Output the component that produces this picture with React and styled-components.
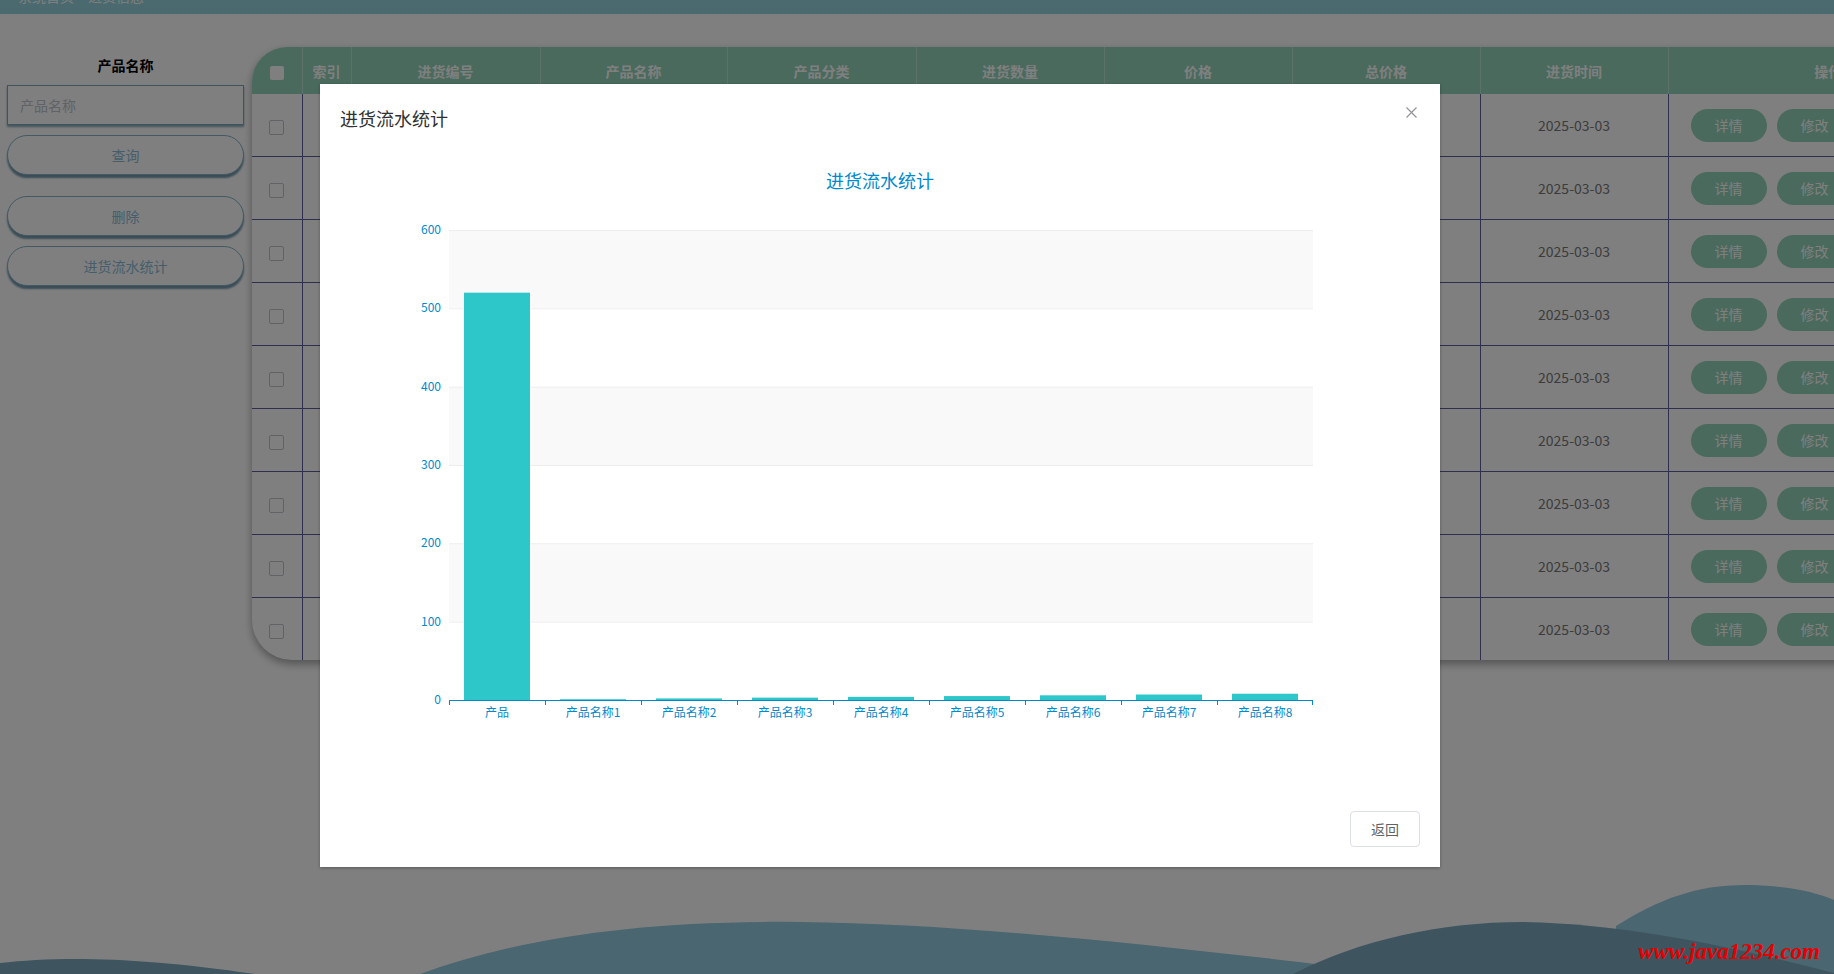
import React from "react";
import styled, { createGlobalStyle } from "styled-components";

const GlobalStyle = createGlobalStyle`
  html, body {
    margin: 0;
    padding: 0;
    height: 100%;
    overflow: hidden;
    background: #fff;
    font-family: "Noto Sans CJK SC", "Noto Sans", sans-serif;
  }
`;

const columns = [
  { key: "check", title: "", width: 50 },
  { key: "idx", title: "索引", width: 49 },
  { key: "code", title: "进货编号", width: 189 },
  { key: "name", title: "产品名称", width: 187 },
  { key: "cat", title: "产品分类", width: 189 },
  { key: "qty", title: "进货数量", width: 188 },
  { key: "price", title: "价格", width: 188 },
  { key: "total", title: "总价格", width: 188 },
  { key: "time", title: "进货时间", width: 188 },
  { key: "op", title: "操作", width: 320 },
];

const rows = Array.from({ length: 9 }, (_, i) => ({
  idx: i + 1,
  code: "JH2025030300" + (i + 1),
  name: i === 0 ? "产品" : "产品名称" + i,
  cat: "分类" + ((i % 3) + 1),
  qty: i === 0 ? 520 : i,
  price: "10.00",
  total: i === 0 ? "5200.00" : (i * 10).toFixed(2),
  time: "2025-03-03",
}));

const chartLabels = ["产品", "产品名称1", "产品名称2", "产品名称3", "产品名称4", "产品名称5", "产品名称6", "产品名称7", "产品名称8"];
const chartValues = [520, 1, 2, 3, 4, 5, 6, 7, 8];

function BarChart() {
  const left = 109;
  const right = 973;
  const top = 90;
  const bottom = 560;
  const max = 600;
  const band = (right - left) / chartValues.length;
  const barW = 66;
  const y = (v) => bottom - (v / max) * (bottom - top);
  const ticks = [0, 100, 200, 300, 400, 500, 600];

  return (
    <ChartSvg width="1080" height="661" viewBox="0 0 1080 661">
      <text x="540" y="48" textAnchor="middle" fontSize="18" fill="#008acd" fontFamily="Noto Sans CJK SC, sans-serif">
        进货流水统计
      </text>
      {ticks.slice(0, -1).map((t, i) => (
        <rect
          key={"area" + t}
          x={left}
          y={y(t + 100)}
          width={right - left}
          height={y(t) - y(t + 100)}
          fill={i % 2 === 1 ? "#f9f9f9" : "#ffffff"}
        />
      ))}
      {ticks.map((t) => (
        <g key={"tick" + t}>
          {t > 0 && <line x1={left} x2={right} y1={y(t) + 0.5} y2={y(t) + 0.5} stroke="#eeeeee" />}
          <text x={left - 8} y={y(t) + 4} textAnchor="end" fontSize="12" fill="#008acd" fontFamily="Noto Sans CJK SC, sans-serif">
            {t}
          </text>
        </g>
      ))}
      {chartValues.map((v, i) => (
        <rect key={"bar" + i} x={left + i * band + (band - barW) / 2} y={y(v)} width={barW} height={bottom - y(v)} fill="#2ec7c9" />
      ))}
      <line x1={left} x2={right} y1={bottom + 0.5} y2={bottom + 0.5} stroke="#008acd" />
      {chartLabels.map((_, i) => (
        <line key={"xt" + i} x1={left + i * band + 0.5} x2={left + i * band + 0.5} y1={bottom} y2={bottom + 5} stroke="#008acd" />
      ))}
      <line x1={right - 0.5} x2={right - 0.5} y1={bottom} y2={bottom + 5} stroke="#008acd" />
      {chartLabels.map((l, i) => (
        <text key={"xl" + i} x={left + i * band + band / 2} y={bottom + 17} textAnchor="middle" fontSize="12" fill="#008acd" fontFamily="Noto Sans CJK SC, sans-serif">
          {l}
        </text>
      ))}
    </ChartSvg>
  );
}

function Waves() {
  return (
    <WaveLayer width="1834" height="120" viewBox="0 0 1834 120" preserveAspectRatio="none">
      <path d="M1616 72 C1660 44, 1700 30, 1750 31 C1790 32, 1815 38, 1834 46 L1834 120 L1616 120 Z" fill="#94cce0" />
      <path d="M420 120 C520 84, 640 66, 800 68 C980 70, 1200 96, 1400 120 Z" fill="#94cce0" />
      <path d="M0 109 C60 102, 140 103, 255 120 L0 120 Z" fill="#7caac0" />
      <path d="M1293 120 C1360 86, 1440 68, 1523 68 C1640 70, 1760 100, 1834 119 L1834 120 Z" fill="#7caac0" />
    </WaveLayer>
  );
}

export default function App() {
  return (
    <Page>
      <GlobalStyle />
      <TopBar>
        <Crumb>系统首页 &gt; 进货信息</Crumb>
      </TopBar>
      <Content>
        <Sidebar>
          <FieldLabel>产品名称</FieldLabel>
          <SearchInput placeholder="产品名称" />
          <SideButton>查询</SideButton>
          <SideButton wide>删除</SideButton>
          <SideButton>进货流水统计</SideButton>
        </Sidebar>
        <TableCard>
          <Table>
            <colgroup>
              {columns.map((c) => (
                <col key={c.key} style={{ width: c.width }} />
              ))}
            </colgroup>
            <thead>
              <tr>
                {columns.map((c) => (
                  <Th key={c.key}>{c.key === "check" ? <HeadCheck /> : c.title}</Th>
                ))}
              </tr>
            </thead>
            <tbody>
              {rows.map((r) => (
                <Tr key={r.idx}>
                  <Td>
                    <RowCheck />
                  </Td>
                  <Td>{r.idx}</Td>
                  <Td>{r.code}</Td>
                  <Td>{r.name}</Td>
                  <Td>{r.cat}</Td>
                  <Td>{r.qty}</Td>
                  <Td>{r.price}</Td>
                  <Td>{r.total}</Td>
                  <Td>{r.time}</Td>
                  <OpCell>
                    <OpButton>详情</OpButton>
                    <OpButton>修改</OpButton>
                    <OpButton>删除</OpButton>
                  </OpCell>
                </Tr>
              ))}
            </tbody>
          </Table>
        </TableCard>
      </Content>
      <Waves />
      <Overlay />
      <Dialog>
        <DialogHeader>
          <DialogTitle>进货流水统计</DialogTitle>
          <CloseButton aria-label="close">
            <svg width="11" height="11" viewBox="0 0 11 11">
              <path d="M0.5 0.5 L10.5 10.5 M10.5 0.5 L0.5 10.5" stroke="#909399" strokeWidth="1.2" fill="none" />
            </svg>
          </CloseButton>
        </DialogHeader>
        <DialogBody>
          <BarChart />
        </DialogBody>
        <DialogFooter>
          <PlainButton>返回</PlainButton>
        </DialogFooter>
      </Dialog>
      <Watermark>www.java1234.com</Watermark>
    </Page>
  );
}

const Page = styled.div`
  position: relative;
  width: 100vw;
  height: 100vh;
  overflow: hidden;
  background: #fff;
`;

const TopBar = styled.div`
  height: 14px;
  background: #94d4de;
  overflow: hidden;
  padding-left: 18px;
`;

const Crumb = styled.div`
  margin-top: -14px;
  line-height: 20px;
  font-size: 14px;
  color: #fff;
`;

const Content = styled.div`
  display: flex;
  align-items: flex-start;
  padding: 33px 0 0 7px;
`;

const Sidebar = styled.div`
  flex: none;
  width: 237px;
  display: flex;
  flex-direction: column;
`;

const FieldLabel = styled.div`
  height: 38px;
  line-height: 36px;
  text-align: center;
  font-size: 14px;
  font-weight: bold;
  color: #000;
`;

const SearchInput = styled.input`
  box-sizing: border-box;
  height: 40px;
  width: 100%;
  padding: 0 12px;
  border: 1px solid #7caac0;
  box-shadow: 0 2px 2px rgba(60, 110, 140, 0.6);
  font-size: 14px;
  font-family: inherit;
  outline: none;
  &::placeholder {
    color: #c0c4cc;
  }
`;

const SideButton = styled.button`
  height: 40px;
  margin-top: ${(p) => (p.wide ? "21px" : "10px")};
  border: 1px solid #86b4c8;
  border-radius: 20px;
  background: #fff;
  box-shadow: 0 3px 2px rgba(60, 110, 140, 0.7);
  color: #8cbcd6;
  font-size: 14px;
  font-family: inherit;
`;

const TableCard = styled.div`
  flex: none;
  margin-left: 8px;
  border-radius: 35px 0 0 40px;
  overflow: hidden;
  box-shadow: 0 4px 8px rgba(0, 0, 0, 0.35);
  background: #fff;
`;

const Table = styled.table`
  width: 1736px;
  table-layout: fixed;
  border-collapse: collapse;
`;

const Th = styled.th`
  height: 47px;
  padding: 0;
  background: #94d4ba;
  color: #fff;
  font-size: 14px;
  font-weight: bold;
  text-align: center;
  border-right: 1px solid rgba(255, 255, 255, 0.35);
  &:last-child {
    border-right: none;
  }
`;

const HeadCheck = styled.span`
  display: inline-block;
  width: 14px;
  height: 14px;
  background: #fff;
  border-radius: 2px;
  vertical-align: middle;
`;

const RowCheck = styled.span`
  display: inline-block;
  width: 13px;
  height: 13px;
  border: 1px solid #c0c4cc;
  border-radius: 2px;
  background: #fff;
  vertical-align: middle;
`;

const Tr = styled.tr`
  border-bottom: 1px solid #5c5c9c;
  &:last-child {
    border-bottom: none;
  }
`;

const Td = styled.td`
  height: 62px;
  padding: 0;
  text-align: center;
  font-size: 14px;
  color: #787878;
  border-right: 1px solid #5c5c9c;
  white-space: nowrap;
  overflow: hidden;
`;

const OpCell = styled(Td)`
  text-align: left;
  padding-left: 22px;
  border-right: none;
`;

const OpButton = styled.button`
  width: 76px;
  height: 33px;
  margin-right: 10px;
  border: none;
  border-radius: 17px;
  background: #94d4ba;
  color: #fff;
  font-size: 14px;
  font-family: inherit;
  vertical-align: middle;
`;

const WaveLayer = styled.svg`
  position: absolute;
  left: 0;
  bottom: 0;
  width: 100%;
  height: 120px;
  display: block;
`;

const Overlay = styled.div`
  position: absolute;
  inset: 0;
  background: rgba(0, 0, 0, 0.5);
`;

const Dialog = styled.div`
  position: absolute;
  left: 320px;
  top: 84px;
  width: 1120px;
  height: 783px;
  display: flex;
  flex-direction: column;
  background: #fff;
  box-shadow: 0 1px 3px rgba(0, 0, 0, 0.3);
`;

const DialogHeader = styled.div`
  position: relative;
  padding: 22px 20px 10px;
`;

const DialogTitle = styled.span`
  display: block;
  line-height: 24px;
  font-size: 18px;
  color: #303133;
`;

const CloseButton = styled.button`
  position: absolute;
  top: 23px;
  right: 23px;
  padding: 0;
  border: none;
  background: none;
  line-height: 0;
`;

const DialogBody = styled.div`
  flex: 1;
  min-height: 0;
  padding: 0 20px;
`;

const ChartSvg = styled.svg`
  display: block;
`;

const DialogFooter = styled.div`
  display: flex;
  justify-content: flex-end;
  padding: 10px 20px 20px;
`;

const PlainButton = styled.button`
  width: 70px;
  height: 36px;
  border: 1px solid #dcdfe6;
  border-radius: 4px;
  background: #fff;
  color: #606266;
  font-size: 14px;
  font-family: inherit;
`;

const Watermark = styled.div`
  position: absolute;
  right: 14px;
  bottom: 9px;
  font-family: "Liberation Serif", serif;
  font-style: italic;
  font-weight: bold;
  font-size: 23px;
  color: #e60000;
`;
